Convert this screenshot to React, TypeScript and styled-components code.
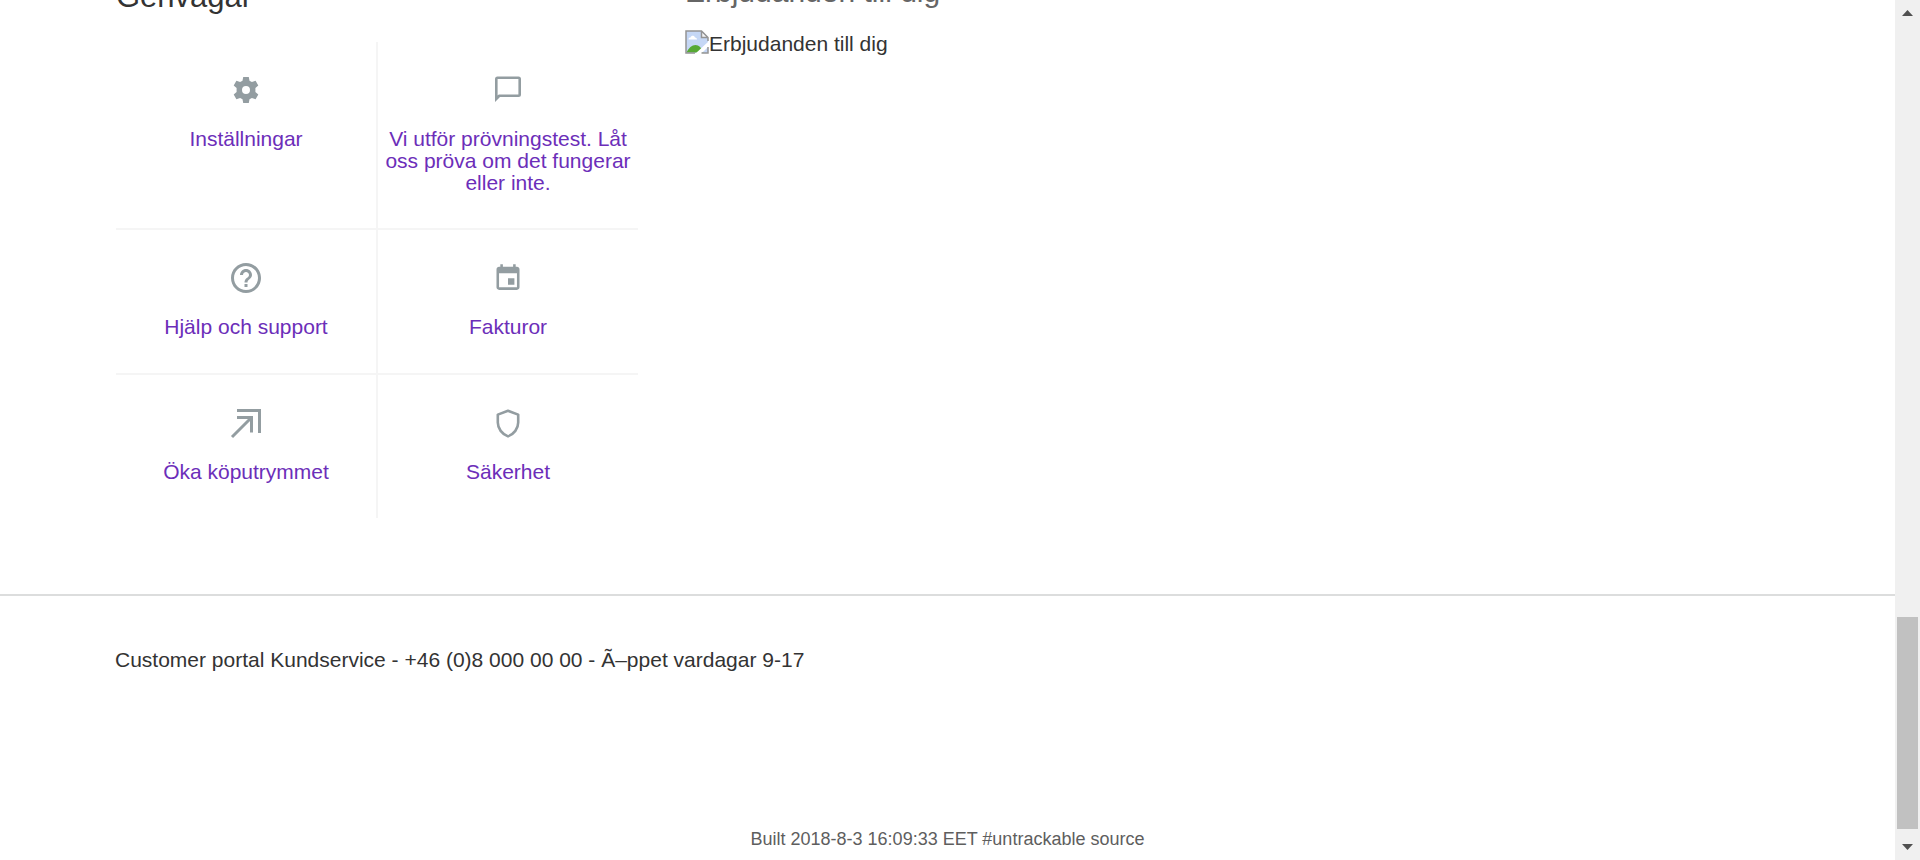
import React from "react";
import styled, { createGlobalStyle } from "styled-components";

const GlobalStyle = createGlobalStyle`
  * { box-sizing: border-box; }
  html, body { margin: 0; background: #fff; }
  body { font-family: "Liberation Sans", Arial, Helvetica, sans-serif; font-size: 21px; color: #333; }
`;

const Shell = styled.div`
  display: flex;
  height: 100vh;
  overflow: hidden;
`;

const Page = styled.div`
  flex: 1;
  min-width: 0;
  display: flex;
  flex-direction: column;
  overflow: hidden;
`;

const Columns = styled.main`
  display: grid;
  grid-template-columns: minmax(0, 522px) minmax(0, 1fr);
  column-gap: 47px;
  padding: 0 116px 76px;
`;

const Column = styled.section``;

const Heading = styled.h2<{ $muted?: boolean }>`
  margin: ${(p) => (p.$muted ? "-22px 0 24px" : "-21px 0 27px")};
  font-size: ${(p) => (p.$muted ? 30 : 31)}px;
  line-height: ${(p) => (p.$muted ? 28 : 36)}px;
  font-weight: 400;
  color: ${(p) => (p.$muted ? "#666" : "#333")};
`;

const ShortcutGrid = styled.nav`
  display: grid;
  grid-template-columns: 1fr 1fr;
  gap: 2px;
  background: #f5f5f5;
`;

const Shortcut = styled.a`
  display: flex;
  flex-direction: column;
  align-items: center;
  gap: 22px;
  min-height: 143px;
  padding: 32px 4px 34px;
  background: #fff;
  color: #6c2eb9;
  line-height: 22px;
  text-align: center;
  text-decoration: none;
`;

const IconBox = styled.svg`
  width: 32px;
  height: 32px;
  flex: none;
  color: #939da1;
`;

const Offer = styled.p`
  display: flex;
  align-items: flex-start;
  margin: 0;
  line-height: 28px;
`;

const MissingImage = styled.svg`
  width: 24px;
  height: 24px;
  flex: none;
`;

const Footer = styled.footer`
  flex: 1;
  display: flex;
  flex-direction: column;
  justify-content: space-between;
  border-top: 2px solid #dcdddd;
  padding: 52px 115px 9px;
`;

const Contact = styled.p`
  margin: 0;
  line-height: 24px;
`;

const Build = styled.p`
  margin: 0;
  font-size: 18px;
  line-height: 24px;
  color: #5e5e5e;
  text-align: center;
`;

const Scrollbar = styled.aside`
  width: 25px;
  flex: none;
  display: flex;
  flex-direction: column;
  background: #f0f0f0;
`;

const ScrollButton = styled.button`
  display: grid;
  place-items: center;
  height: 26px;
  padding: 0;
  border: 0;
  background: none;
`;

const Track = styled.div`
  flex: 1;
  display: grid;
  grid-template-rows: 591fr 212fr 5fr;
  padding: 0 2px;
`;

const Thumb = styled.div`
  grid-row: 2;
  background: #c1c1c1;
`;

const icons = {
  settings: (
    <path
      fill="currentColor"
      fillRule="evenodd"
      d="M13.2 3h5.6l.7 3.7 2.4 1.4 3.7-1.3 2.7 4.7-2.9 2.6v3.8l2.9 2.6-2.7 4.7-3.7-1.3-2.4 1.4-.7 3.7h-5.6l-.7-3.7-2.4-1.4-3.7 1.3-2.7-4.7 2.9-2.6v-3.8l-2.900-2.600 2.700-4.700 3.700 1.300 2.400-1.400zM16 12a4 4 0 1 0 0 8 4 4 0 0 0 0-8z"
    />
  ),
  chat: (
    <path
      fill="currentColor"
      fillRule="evenodd"
      d="M5.500 2.500h21A2.500 2.500 0 0 1 29 5v15.500a2.500 2.500 0 0 1-2.500 2.500H8L3 28V5A2.500 2.500 0 0 1 5.500 2.500zM5.600 5v16.500l1.200-1H26.400V5z"
    />
  ),
  help: (
    <g transform="translate(-2 -2) scale(1.5)">
      <path
        fill="currentColor"
        d="M11 18h2v-2h-2v2zm1-16C6.480 2 2 6.480 2 12s4.480 10 10 10 10-4.480 10-10S17.520 2 12 2zm0 18c-4.410 0-8-3.590-8-8s3.590-8 8-8 8 3.590 8 8-3.590 8-8 8zm0-14c-2.210 0-4 1.790-4 4h2c0-1.100.9-2 2-2s2 .9 2 2c0 2-3 1.750-3 5h2c0-2.250 3-2.500 3-5 0-2.210-1.790-4-4-4z"
      />
    </g>
  ),
  calendar: (
    <g transform="translate(0.640 1) scale(1.280)">
      <path
        fill="currentColor"
        d="M17 12h-5v5h5v-5zM16 1v2H8V1H6v2H5c-1.110 0-1.990.9-1.990 2L3 19c0 1.100.89 2 2 2h14c1.100 0 2-.9 2-2V5c0-1.100-.9-2-2-2h-1V1h-2zm3 18H5V8h14v11z"
      />
    </g>
  ),
  arrow: (
    <path
      fill="none"
      stroke="currentColor"
      strokeWidth="3"
      d="M7 3.500h22.500V26M7 10.500h14.500V25.500M21 11L2 30"
    />
  ),
  shield: (
    <path
      fill="none"
      stroke="currentColor"
      strokeWidth="2.600"
      strokeLinejoin="round"
      d="M16 3.800L26.200 7.600v8c0 6-4.200 11.500-10.200 13.800C10 27.100 5.800 21.600 5.800 15.600V7.600z"
    />
  ),
};

const shortcuts: { icon: keyof typeof icons; label: string }[] = [
  { icon: "settings", label: "Inställningar" },
  { icon: "chat", label: "Vi utför prövningstest. Låt oss pröva om det fungerar eller inte." },
  { icon: "help", label: "Hjälp och support" },
  { icon: "calendar", label: "Fakturor" },
  { icon: "arrow", label: "Öka köputrymmet" },
  { icon: "shield", label: "Säkerhet" },
];

export default function App() {
  return (
    <>
      <GlobalStyle />
      <Shell>
        <Page>
          <Columns>
            <Column>
              <Heading>Genvägar</Heading>
              <ShortcutGrid>
                {shortcuts.map((s) => (
                  <Shortcut key={s.label} href="#">
                    <IconBox viewBox="0 0 32 32" aria-hidden="true">
                      {icons[s.icon]}
                    </IconBox>
                    <span>{s.label}</span>
                  </Shortcut>
                ))}
              </ShortcutGrid>
            </Column>
            <Column>
              <Heading $muted>Erbjudanden till dig</Heading>
              <Offer>
                <MissingImage viewBox="0 0 24 24" aria-hidden="true">
                  <path fill="#c5d7f5" d="M1 1h16l6 6v16H1z" />
                  <path fill="#fff" d="M3.500 9.500c0-2 1.500-2 2-2 .5-2.500 4-2.500 4.500 0 1.500 0 2 1 2 2z" />
                  <path fill="#57a934" d="M1.500 22.500c2-4.500 5.500-7.500 9-7.500s6 3 8 7.500z" />
                  <path fill="#fff" d="M10 24L24 11v5l-8 8z" />
                  <path fill="#f4f4f4" d="M16 1v7h7z" />
                  <path
                    fill="none"
                    stroke="#949494"
                    strokeWidth="1.500"
                    d="M10 23H1V1h15.500l6.500 6.500V11M16.500 1v6.500H23M23 17v6h-6.500"
                  />
                </MissingImage>
                <span>Erbjudanden till dig</span>
              </Offer>
            </Column>
          </Columns>
          <Footer>
            <Contact>Customer portal Kundservice - +46 (0)8 000 00 00 - Ã–ppet vardagar 9-17</Contact>
            <Build>Built 2018-8-3 16:09:33 EET #untrackable source</Build>
          </Footer>
        </Page>
        <Scrollbar>
          <ScrollButton aria-label="Scroll up">
            <svg width="11" height="6" viewBox="0 0 11 6">
              <path fill="#505050" d="M0 6L5.500 0 11 6z" />
            </svg>
          </ScrollButton>
          <Track>
            <Thumb />
          </Track>
          <ScrollButton aria-label="Scroll down">
            <svg width="11" height="6" viewBox="0 0 11 6">
              <path fill="#505050" d="M0 0h11L5.500 6z" />
            </svg>
          </ScrollButton>
        </Scrollbar>
      </Shell>
    </>
  );
}
